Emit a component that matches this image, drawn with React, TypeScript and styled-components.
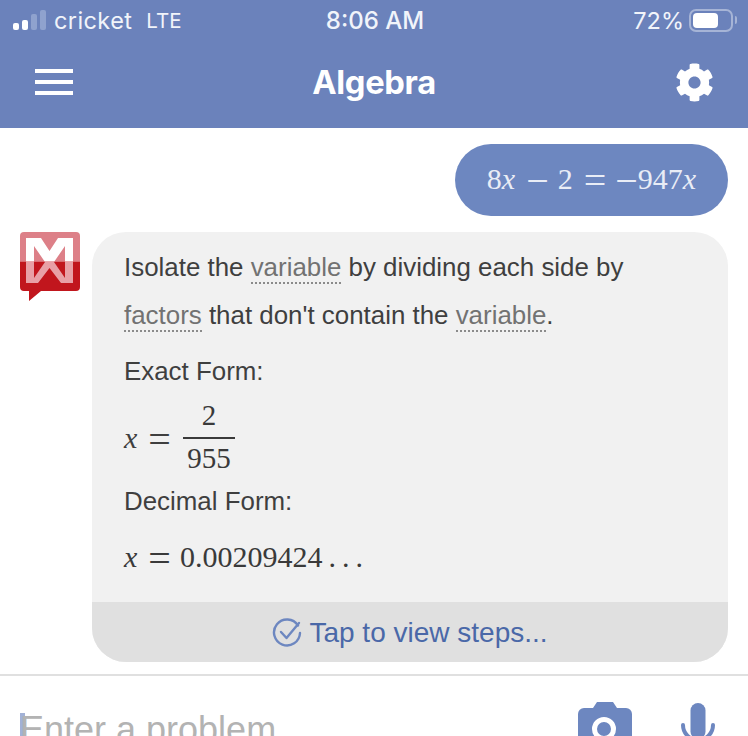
import styled, { createGlobalStyle } from "styled-components";
import { FaCog } from "react-icons/fa";

const GlobalStyle = createGlobalStyle`
  html, body {
    margin: 0;
    padding: 0;
    background: #fff;
  }
  * {
    box-sizing: border-box;
  }
`;

const Page = styled.div`
  width: 748px;
  height: 736px;
  overflow: hidden;
  background: #fff;
  font-family: "Liberation Sans", Arial, sans-serif;
  color: #3f3f3f;
`;

const Header = styled.header`
  height: 128px;
  background: #6b82bb;
  color: #fff;
`;

const StatusBar = styled.div`
  height: 40px;
  padding: 0 11px 0 13px;
  display: grid;
  grid-template-columns: 1fr auto 1fr;
  align-items: center;
  font-family: Inter, "Liberation Sans", sans-serif;
  font-size: 23.5px;
  color: #f1f4fa;
`;

const Carrier = styled.div`
  display: flex;
  align-items: center;
  gap: 8px;
  letter-spacing: 0.4px;
`;

const Signal = styled.div`
  display: flex;
  align-items: flex-end;
  gap: 3px;
  height: 20px;
`;

const SignalBar = styled.span<{ $h: number; $on?: boolean }>`
  width: 6px;
  height: ${(p) => p.$h}px;
  border-radius: 2px;
  background: ${(p) => (p.$on ? "#fff" : "#8fa2ce")};
`;

const Lte = styled.span`
  margin-left: 6px;
  font-size: 20.5px;
  letter-spacing: 0;
`;

const Clock = styled.div`
  font-size: 24px;
  font-weight: 500;
`;

const BatteryArea = styled.div`
  display: flex;
  justify-content: flex-end;
  align-items: center;
  gap: 5px;
`;

const Battery = styled.div`
  width: 44px;
  height: 23px;
  border: 2px solid #a6b4d6;
  border-radius: 7px;
  padding: 2px 13px 2px 2px;
`;

const BatteryFill = styled.div`
  height: 100%;
  background: #fff;
  border-radius: 4px;
`;

const BatteryTip = styled.span`
  width: 2px;
  height: 8px;
  margin-left: -3px;
  background: #a6b4d6;
  border-radius: 0 2px 2px 0;
`;

const NavBar = styled.div`
  height: 88px;
  padding: 0 34px 4px 35px;
  display: flex;
  align-items: center;
  justify-content: space-between;
`;

const Menu = styled.div`
  width: 38px;
  display: flex;
  flex-direction: column;
  gap: 7px;
`;

const MenuLine = styled.span`
  height: 4px;
  background: #fff;
`;

const Title = styled.h1`
  margin: 0;
  font-size: 32.7px;
  font-weight: 700;
  font-family: Inter, "Liberation Sans", sans-serif;
  letter-spacing: -0.3px;
`;

const GearIcon = styled(FaCog)`
  width: 39px;
  height: 39px;
  color: #fff;
`;

const Chat = styled.main`
  padding: 16px 20px 0;
  display: flex;
  flex-direction: column;
  gap: 16px;
`;

const UserBubble = styled.div`
  align-self: flex-end;
  width: 273px;
  height: 72px;
  padding-bottom: 3px;
  border-radius: 36px;
  background: #6d87c0;
  color: #e9edf6;
  display: flex;
  align-items: center;
  justify-content: center;
`;

const MathLine = styled.span`
  font-family: "Liberation Serif", "DejaVu Serif", serif;
  font-size: 30px;
  white-space: pre;
`;

const Var = styled.i`
  font-family: "Liberation Serif", serif;
  font-style: italic;
`;

const Op = styled.span<{ $unary?: boolean }>`
  font-size: 40px;
  line-height: 0;
  vertical-align: -5px;
  margin: ${(p) => (p.$unary ? "0" : "0 9px 0 11px")};
`;

const Dots = styled.span`
  word-spacing: -1.5px;
`;

const Answer = styled.section`
  display: flex;
  gap: 12px;
  align-items: flex-start;
`;

const Card = styled.div`
  width: 636px;
  height: 430px;
  border-radius: 34px;
  background: #f1f1f1;
  overflow: hidden;
  display: flex;
  flex-direction: column;
`;

const CardBody = styled.div`
  flex: 1;
  padding: 12px 32px 0;
  font-size: 25.9px;
`;

const Sentence = styled.p`
  margin: 0;
  line-height: 47.5px;
`;

const Term = styled.span`
  color: #727272;
  border-bottom: 2px dotted #8b8b8b;
  padding-bottom: 1px;
`;

const FormLabel = styled.div<{ $top: number }>`
  margin-top: ${(p) => p.$top}px;
  line-height: 32px;
`;

const FractionRow = styled.div`
  margin-top: 12px;
  display: flex;
  align-items: center;
  gap: 3px;
  height: 78px;
`;

const Fraction = styled.span`
  display: inline-flex;
  flex-direction: column;
  align-items: center;
  width: 52px;
  font-family: "Liberation Serif", serif;
  font-size: 29px;
  line-height: 36px;
  color: #3a3a3a;
`;

const Numerator = styled.span`
  width: 100%;
  height: 38px;
  line-height: 28px;
  text-align: center;
  border-bottom: 2px solid #3a3a3a;
`;

const Denominator = styled.span`
  margin-top: 1px;
`;

const DecimalRow = styled.div`
  margin-top: 23px;
  color: #3a3a3a;
`;

const StepsBar = styled.div`
  height: 60px;
  padding-top: 2px;
  background: #e0e0e0;
  color: #4a68a8;
  display: flex;
  align-items: center;
  justify-content: center;
  gap: 7px;
  font-size: 28px;
`;

const InputBar = styled.footer`
  margin-top: 12px;
  height: 63px;
  border-top: 2px solid #e0e0e0;
  padding: 27px 33px 0 20px;
  display: flex;
  align-items: flex-start;
`;

const Caret = styled.span`
  width: 5px;
  height: 40px;
  margin-top: 10px;
  background: #a2b1d6;
  flex: none;
`;

const Placeholder = styled.span`
  flex: 1;
  margin-left: -5px;
  margin-top: 7px;
  font-size: 36px;
  color: #b3b3b3;
  line-height: 40px;
  white-space: nowrap;
`;

const InputIcons = styled.div`
  display: flex;
  gap: 49px;
  margin-top: -1px;
`;

const LOGO_M =
  "M6 6H53V51H6zM21 6L29.5 19L38 6zM14 14V46L25 30zM45 14V46L34 30zM18 51H41L29.5 36z";

const Logo = () => (
  <svg width="60" height="70" viewBox="0 0 60 70" style={{ flex: "none" }}>
    <defs>
      <clipPath id="logo-top">
        <rect x="0" y="0" width="60" height="29.5" />
      </clipPath>
      <clipPath id="logo-bottom">
        <rect x="0" y="29.5" width="60" height="30" />
      </clipPath>
    </defs>
    <path d="M4 0H56a4 4 0 0 1 4 4V29.5H0V4a4 4 0 0 1 4-4z" fill="#dd8088" />
    <path d="M0 29.5H60V55a4 4 0 0 1-4 4H21L9 69V59H4a4 4 0 0 1-4-4z" fill="#c1161d" />
    <path d={LOGO_M} fillRule="evenodd" fill="#fff" clipPath="url(#logo-top)" />
    <path d={LOGO_M} fillRule="evenodd" fill="#e8a0a6" clipPath="url(#logo-bottom)" />
  </svg>
);

const CheckCircle = () => (
  <svg width="30" height="30" viewBox="0 0 30 30" fill="none" stroke="#6d87c0" strokeWidth="2.4">
    <path d="M26 7.5A13 13 0 1 0 28 15" strokeLinecap="round" />
    <path d="M9 14l5.5 6L27 5" strokeLinecap="round" strokeLinejoin="round" />
  </svg>
);

const Camera = () => (
  <svg width="54" height="40" viewBox="0 0 54 40">
    <path
      fillRule="evenodd"
      d="M6 6H15L19 0H35L39 6H48a6 6 0 0 1 6 6V60H0V12a6 6 0 0 1 6-6zM26 15a12 12 0 1 0 0 24a12 12 0 1 0 0-24zM26 20a7 7 0 1 1 0 14a7 7 0 1 1 0-14z"
      fill="#6d87c0"
    />
  </svg>
);

const Mic = () => (
  <svg width="34" height="40" viewBox="0 0 34 40" fill="none">
    <rect x="9.5" y="1" width="15" height="36" rx="7.5" fill="#6d87c0" />
    <path d="M2 23a15 15 0 0 0 30 0" stroke="#6d87c0" strokeWidth="4" strokeLinecap="round" />
  </svg>
);

export default function App() {
  return (
    <Page>
      <GlobalStyle />
      <Header>
        <StatusBar>
          <Carrier>
            <Signal>
              <SignalBar $h={7} $on />
              <SignalBar $h={10} $on />
              <SignalBar $h={16} />
              <SignalBar $h={20} />
            </Signal>
            cricket
            <Lte>LTE</Lte>
          </Carrier>
          <Clock>8:06 AM</Clock>
          <BatteryArea>
            72%
            <Battery>
              <BatteryFill />
            </Battery>
            <BatteryTip />
          </BatteryArea>
        </StatusBar>
        <NavBar>
          <Menu>
            <MenuLine />
            <MenuLine />
            <MenuLine />
          </Menu>
          <Title>Algebra</Title>
          <GearIcon />
        </NavBar>
      </Header>
      <Chat>
        <UserBubble>
          <MathLine>
            8<Var>x</Var>
            <Op>−</Op>2<Op>=</Op>
            <Op $unary>−</Op>947<Var>x</Var>
          </MathLine>
        </UserBubble>
        <Answer>
          <Logo />
          <Card>
            <CardBody>
              <Sentence>
                Isolate the <Term>variable</Term> by dividing each side by
              </Sentence>
              <Sentence>
                <Term>factors</Term> that don't contain the <Term>variable</Term>.
              </Sentence>
              <FormLabel $top={16}>Exact Form:</FormLabel>
              <FractionRow>
                <MathLine>
                  <Var>x</Var>
                  <Op>=</Op>
                </MathLine>
                <Fraction>
                  <Numerator>2</Numerator>
                  <Denominator>955</Denominator>
                </Fraction>
              </FractionRow>
              <FormLabel $top={8}>Decimal Form:</FormLabel>
              <DecimalRow>
                <MathLine>
                  <Var>x</Var>
                  <Op>=</Op>0.00209424<Dots> . . .</Dots>
                </MathLine>
              </DecimalRow>
            </CardBody>
            <StepsBar>
              <CheckCircle />
              Tap to view steps...
            </StepsBar>
          </Card>
        </Answer>
      </Chat>
      <InputBar>
        <Caret />
        <Placeholder>Enter a problem</Placeholder>
        <InputIcons>
          <Camera />
          <Mic />
        </InputIcons>
      </InputBar>
    </Page>
  );
}
